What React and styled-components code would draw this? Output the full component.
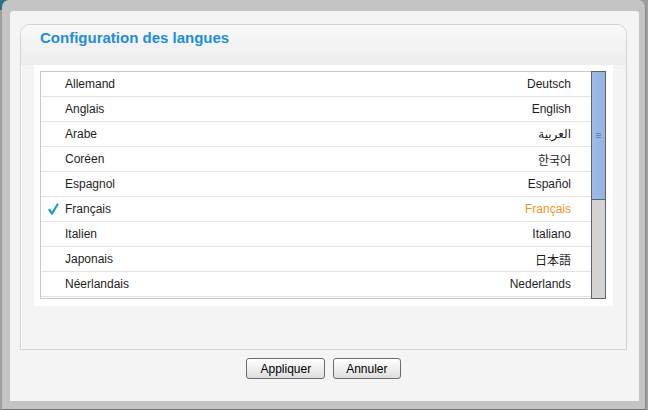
import { useState } from 'react'
import styled, { createGlobalStyle } from 'styled-components'

const GlobalStyle = createGlobalStyle`
  html, body {
    margin: 0;
    padding: 0;
  }
  body {
    background:
      linear-gradient(#2c6f88, #2c6f88) top left / 10px 10px no-repeat,
      #9e9e9e;
    font-family: "Liberation Sans", "DejaVu Sans", "Noto Sans CJK JP", sans-serif;
  }
`

const LANGUAGES = [
  { name: 'Allemand', native: 'Deutsch' },
  { name: 'Anglais', native: 'English' },
  { name: 'Arabe', native: 'العربية' },
  { name: 'Coréen', native: '한국어' },
  { name: 'Espagnol', native: 'Español' },
  { name: 'Français', native: 'Français' },
  { name: 'Italien', native: 'Italiano' },
  { name: 'Japonais', native: '日本語' },
  { name: 'Néerlandais', native: 'Nederlands' },
  { name: 'Polonais', native: 'Polski' },
  { name: 'Portugais', native: 'Português' },
  { name: 'Russe', native: 'Русский' },
  { name: 'Suédois', native: 'Svenska' },
  { name: 'Tchèque', native: 'Čeština' },
  { name: 'Turc', native: 'Türkçe' },
  { name: 'Vietnamien', native: 'Tiếng Việt' }
]

const ROW_HEIGHT = 25
const LIST_HEIGHT = 226

const Screen = styled.div`
  width: 648px;
  height: 410px;
  overflow: hidden;
`

const Frame = styled.div`
  box-sizing: border-box;
  margin-left: 2px;
  width: 644px;
  height: 410px;
  padding: 11px 6px 8px 8px;
  background: #c4c4c4;
  border-bottom: 1px solid #6f6f6f;
  border-right: 1px solid #8a8a8a;
  border-radius: 7px 7px 0 0;
  display: flex;
`

const Panel = styled.div`
  flex: 1;
  box-sizing: border-box;
  background: #f4f4f4;
  border-radius: 3px 3px 0 0;
  padding: 13px 12px 0 10px;
  display: flex;
  flex-direction: column;
`

const Fieldset = styled.div`
  box-sizing: border-box;
  height: 326px;
  border: 1px solid #d3d3d3;
  border-radius: 10px 10px 0 0;
  box-shadow: inset 1px 1px 0 #ffffff;
  background: #f4f4f4;
  display: flex;
  flex-direction: column;
`

const Header = styled.div`
  height: 40px;
  padding-left: 19px;
  border-radius: 9px 9px 0 0;
  background: linear-gradient(#f9f9f9, #ececec);
  display: flex;
  align-items: flex-start;
`

const Title = styled.h1`
  margin: 4px 0 0;
  font-size: 15px;
  font-weight: bold;
  line-height: 18px;
  color: #1d8de0;
`

const Content = styled.div`
  padding: 0 13px;
`

const WhiteBox = styled.div`
  height: 241px;
  box-sizing: border-box;
  background: #ffffff;
  padding: 6px 7px 7px 6px;
`

const ListBox = styled.div`
  display: flex;
  height: 228px;
`

const List = styled.ul`
  flex: 1;
  margin: 0;
  padding: 0;
  list-style: none;
  border: 1px solid #c9c9c9;
  border-right: none;
  height: ${LIST_HEIGHT}px;
  overflow-y: auto;
  scrollbar-width: none;
  &::-webkit-scrollbar {
    display: none;
  }
`

const Row = styled.li`
  box-sizing: border-box;
  height: ${ROW_HEIGHT}px;
  border-bottom: 1px solid #e3e3e3;
  padding: 0 20px 0 7px;
  display: flex;
  align-items: center;
  font-size: 12px;
  color: #1e1e1e;
  cursor: pointer;
`

const CheckCell = styled.span`
  width: 17px;
  height: 12px;
  display: flex;
  align-items: center;
`

const Name = styled.span`
  flex: 1;
`

const Native = styled.span`
  color: ${p => (p.$active ? '#f3951c' : '#1e1e1e')};
`

const Scrollbar = styled.div`
  width: 13px;
  border: 1px solid #5b6475;
  background: #d5d3d1;
  display: flex;
  flex-direction: column;
`

const Thumb = styled.div`
  box-sizing: border-box;
  background: linear-gradient(to right, #9dbbe6, #93b3e1);
  border-bottom: 1px solid #5b6475;
  display: flex;
  align-items: center;
  justify-content: center;
`

const Grip = styled.span`
  width: 5px;
  height: 5px;
  background: repeating-linear-gradient(#6c82a6 0 1px, transparent 1px 2px);
`

const ButtonRow = styled.div`
  margin-top: 8px;
  display: flex;
  justify-content: center;
  gap: 8px;
`

const Button = styled.button`
  height: 21px;
  padding: 0 ${p => p.$pad}px;
  border: 1px solid #6c6c6c;
  border-radius: 3px;
  background: linear-gradient(#ffffff, #dedede);
  box-shadow: inset 0 1px 0 #ffffff;
  font-family: "Liberation Sans", sans-serif;
  font-size: 12px;
  color: #000;
  cursor: pointer;
`

const Check = () => (
  <svg width="11" height="12" viewBox="0 0 11 12">
    <path d="M1.5 7 L4 10.5 L9.5 1.5" fill="none" stroke="#1e95d4" strokeWidth="2.2" strokeLinecap="round" strokeLinejoin="round" />
  </svg>
)

const App = () => {
  const [selected, setSelected] = useState('Français')
  const [scrollTop, setScrollTop] = useState(0)
  const contentHeight = LANGUAGES.length * ROW_HEIGHT
  const thumbHeight = Math.round((LIST_HEIGHT / contentHeight) * LIST_HEIGHT)
  const thumbOffset = Math.round((scrollTop / contentHeight) * LIST_HEIGHT)

  return (
    <Screen>
      <GlobalStyle />
      <Frame>
        <Panel>
          <Fieldset>
            <Header>
              <Title>Configuration des langues</Title>
            </Header>
            <Content>
              <WhiteBox>
                <ListBox>
                  <List onScroll={e => setScrollTop(e.currentTarget.scrollTop)}>
                    {LANGUAGES.map(lang => {
                      const active = lang.name === selected
                      return (
                        <Row key={lang.name} onClick={() => setSelected(lang.name)}>
                          <CheckCell>{active && <Check />}</CheckCell>
                          <Name>{lang.name}</Name>
                          <Native $active={active}>{lang.native}</Native>
                        </Row>
                      )
                    })}
                  </List>
                  <Scrollbar>
                    <Thumb style={{ height: thumbHeight, marginTop: thumbOffset }}>
                      <Grip />
                    </Thumb>
                  </Scrollbar>
                </ListBox>
              </WhiteBox>
            </Content>
          </Fieldset>
          <ButtonRow>
            <Button $pad={13}>Appliquer</Button>
            <Button $pad={12}>Annuler</Button>
          </ButtonRow>
        </Panel>
      </Frame>
    </Screen>
  )
}

export default App
